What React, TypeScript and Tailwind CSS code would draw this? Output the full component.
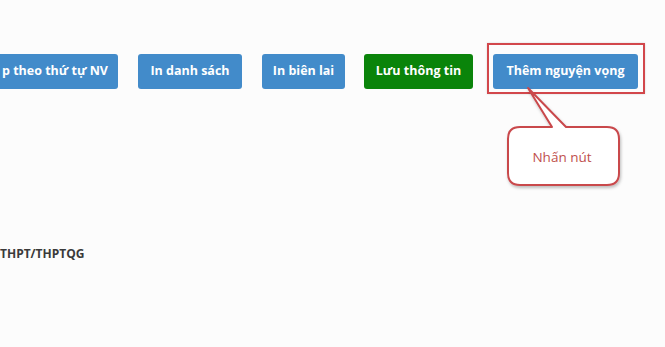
import React from "react";

const btn =
  "h-[35px] rounded-[3px] text-white font-bold text-[12.5px] flex items-center justify-center shrink-0 whitespace-nowrap";

export default function App() {
  return (
    <div
      className="relative w-[665px] h-[347px] overflow-hidden bg-[#fcfcfc]"
      style={{ fontFamily: "'Open Sans', Arial, sans-serif" }}
    >
      <div className="pt-[54px] flex gap-[20px]">
        <div className={`${btn} w-[118px] justify-end pr-[10px] bg-[#428bca] rounded-l-none`}>
          p theo thứ tự NV
        </div>
        <div className={`${btn} w-[104px] bg-[#428bca]`}>In danh sách</div>
        <div className={`${btn} w-[83px] bg-[#428bca]`}>In biên lai</div>
        <div className={`${btn} w-[109px] ml-[-1px] bg-[#0a840a]`}>Lưu thông tin</div>
        <div className={`${btn} w-[145px] bg-[#428bca]`}>Thêm nguyện vọng</div>
      </div>

      <div className="mt-[156px] text-[12px] font-bold text-[#3a3a3a] whitespace-nowrap">
        THPT/THPTQG
      </div>

      {/* highlight box */}
      <div className="absolute left-[487px] top-[43px] w-[158px] h-[51px] border-2 border-[#d2474b] shadow-[0_0_2px_rgba(0,0,0,0.15)]" />

      {/* callout */}
      <svg
        className="absolute left-0 top-0"
        width="665"
        height="347"
        viewBox="0 0 665 347"
      >
        <defs>
          <filter id="sh" x="-20%" y="-20%" width="140%" height="140%">
            <feDropShadow dx="1" dy="2" stdDeviation="1.5" floodColor="#000" floodOpacity="0.25" />
          </filter>
        </defs>
        <path
          d="M520 127 L552 127 L528 88 L566 127 L607 127 Q619 127 619 139 L619 173 Q619 185 607 185 L520 185 Q508 185 508 173 L508 139 Q508 127 520 127 Z"
          fill="#ffffff"
          stroke="#c9484c"
          strokeWidth="2"
          strokeLinejoin="round"
          filter="url(#sh)"
        />
        <text
          x="562"
          y="162"
          textAnchor="middle"
          fontSize="13.5"
          fill="#c0504d"
          fontFamily="'Open Sans', Arial, sans-serif"
        >
          Nhấn nút
        </text>
      </svg>
    </div>
  );
}
